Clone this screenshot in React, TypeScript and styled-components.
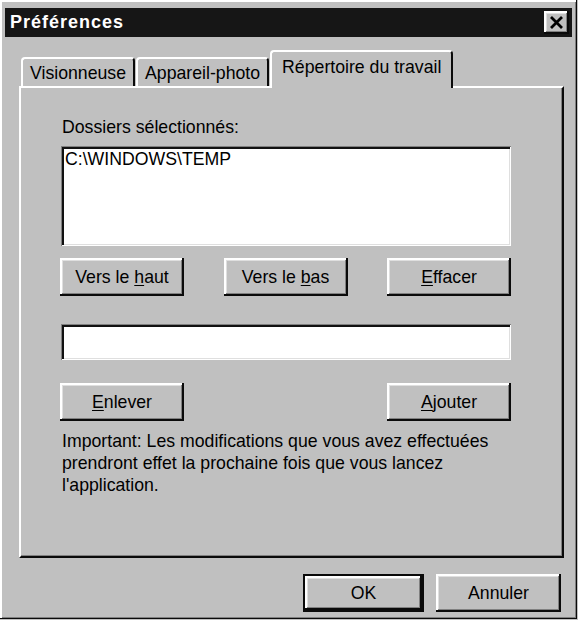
import React, { FC } from "react";
import styled, { createGlobalStyle, css } from "styled-components";

const GlobalStyle = createGlobalStyle`
  html, body {
    margin: 0;
    padding: 0;
    background: #c0c0c0;
  }
  body {
    font-family: "Liberation Sans", Arial, sans-serif;
    font-size: 17.7px;
    color: #000;
  }
`;

const raised = css`
  box-shadow: inset -2px -2px 0 #0a0a0a, inset 2px 2px 0 #fff,
    inset -3px -3px 0 #808080, inset 3px 3px 0 #dfdfdf;
`;

const sunken = css`
  box-shadow: inset 1px 1px 0 #808080, inset -1px -1px 0 #fff,
    inset 3px 3px 0 #111, inset -2px -2px 0 #dfdfdf;
`;

const Window = styled.div`
  box-sizing: border-box;
  width: 577px;
  height: 619px;
  padding: 8px 5px 0 5px;
  background: #c0c0c0;
  box-shadow: inset -1px -1px 0 #0a0a0a, inset 2px 2px 0 #fff,
    inset -2px -2px 0 #808080;
`;

const TitleBar = styled.div`
  height: 29px;
  background: #161616;
  color: #fff;
  font-weight: bold;
  font-size: 18px;
  letter-spacing: 1px;
  display: flex;
  align-items: center;
  justify-content: space-between;
  padding: 0 3px 0 5px;
`;

const CloseButton = styled.div`
  width: 25px;
  height: 23px;
  background: #c0c0c0;
  display: flex;
  align-items: center;
  justify-content: center;
  ${raised};
`;

const TabRow = styled.div`
  display: flex;
  align-items: flex-end;
  height: 36px;
  margin: 13px 0 0 16px;
  position: relative;
  z-index: 1;
`;

const Tab = styled.div<{ $active?: boolean }>`
  box-sizing: border-box;
  height: ${(p) => (p.$active ? 38 : 29)}px;
  margin: ${(p) => (p.$active ? "0 0 -2px 0" : "0 1px 0 0")};
  padding: ${(p) => (p.$active ? "0 10px 6px" : "2px 7px 0")};
  display: flex;
  align-items: center;
  background: #c0c0c0;
  border-top: 2px solid #fff;
  border-left: 2px solid #fff;
  border-right: 2px solid #0a0a0a;
  border-radius: 4px 4px 0 0;
  position: relative;
  z-index: ${(p) => (p.$active ? 2 : 0)};
`;

const Panel = styled.div`
  box-sizing: border-box;
  width: 545px;
  height: 472px;
  margin-left: 14px;
  padding: 29px 51px 0 39px;
  border-top: 2px solid #fff;
  border-left: 2px solid #fff;
  border-right: 2px solid #0a0a0a;
  border-bottom: 2px solid #0a0a0a;
  box-shadow: inset -1px -1px 0 #808080;
`;

const Label = styled.div`
  line-height: 20px;
  padding-left: 2px;
`;

const ListBox = styled.div`
  box-sizing: border-box;
  height: 100px;
  margin: 9px 0 0 1px;
  padding: 3px 4px;
  background: #fff;
  line-height: 20px;
  ${sunken};
`;

const TextField = styled.div`
  box-sizing: border-box;
  height: 36px;
  margin: 28px 0 0 1px;
  background: #fff;
  ${sunken};
`;

const ButtonRow = styled.div<{ $top: number }>`
  display: flex;
  justify-content: space-between;
  margin-top: ${(p) => p.$top}px;
`;

const Button = styled.div<{ $default?: boolean; $width?: number }>`
  box-sizing: border-box;
  width: ${(p) => p.$width ?? 124}px;
  height: 38px;
  display: flex;
  align-items: center;
  justify-content: center;
  background: #c0c0c0;
  ${raised};
  ${(p) =>
    p.$default &&
    css`
      border: 2px solid #0a0a0a;
    `}
`;

const Key = styled.span`
  text-decoration: underline;
  text-underline-offset: 2px;
`;

const Note = styled.p`
  margin: 9px 0 0 2px;
  line-height: 22px;
`;

const Footer = styled.div`
  display: flex;
  justify-content: flex-end;
  gap: 12px;
  margin-top: 16px;
  padding-right: 11px;
`;

const CloseIcon: FC = () => (
  <svg width="15" height="13" viewBox="0 0 15 13">
    <path d="M2 1 L13 12 M13 1 L2 12" stroke="#000" strokeWidth="2.8" />
  </svg>
);

export default function App() {
  return (
    <>
      <GlobalStyle />
      <Window>
        <TitleBar>
          <span>Préférences</span>
          <CloseButton>
            <CloseIcon />
          </CloseButton>
        </TitleBar>
        <TabRow>
          <Tab>Visionneuse</Tab>
          <Tab>Appareil-photo</Tab>
          <Tab $active>Répertoire du travail</Tab>
        </TabRow>
        <Panel>
          <Label>Dossiers sélectionnés:</Label>
          <ListBox>C:\WINDOWS\TEMP</ListBox>
          <ButtonRow $top={12}>
            <Button>
              Vers le&nbsp;<Key>h</Key>aut
            </Button>
            <Button>
              Vers le&nbsp;<Key>b</Key>as
            </Button>
            <Button>
              <Key>E</Key>ffacer
            </Button>
          </ButtonRow>
          <TextField />
          <ButtonRow $top={23}>
            <Button>
              <Key>E</Key>nlever
            </Button>
            <Button>
              <Key>A</Key>jouter
            </Button>
          </ButtonRow>
          <Note>
            Important: Les modifications que vous avez effectuées prendront
            effet la prochaine fois que vous lancez l'application.
          </Note>
        </Panel>
        <Footer>
          <Button $default $width={121}>
            OK
          </Button>
          <Button $width={125}>Annuler</Button>
        </Footer>
      </Window>
    </>
  );
}
